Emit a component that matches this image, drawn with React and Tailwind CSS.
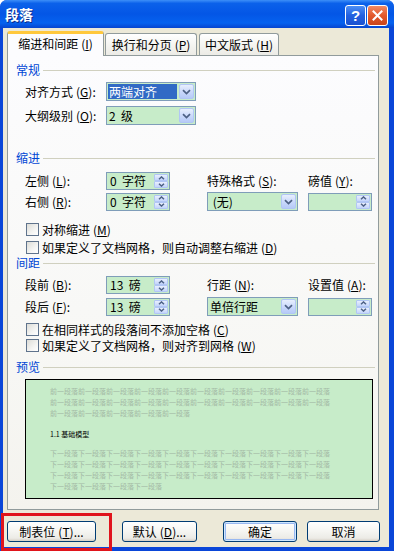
import React from "react";

function K({ c }) {
  return (
    <span className="ml-[3px]">
      (<span className="underline underline-offset-[1px]">{c}</span>)
    </span>
  );
}

function DropBtn() {
  return (
    <div className="w-[15px] h-full rounded-[2px] border border-[#b1c6f5] bg-[linear-gradient(180deg,#e8effd_0%,#c9d8fb_55%,#b6caf7_100%)] flex items-center justify-center">
      <svg width="9" height="6" viewBox="0 0 9 6">
        <path d="M1 1.2 L4.5 4.6 L8 1.2" fill="none" stroke="#4d6185" strokeWidth="1.7" />
      </svg>
    </div>
  );
}

function Select({ className, children, highlight }) {
  return (
    <div className={`h-[19px] border border-[#7f9db9] bg-[#c7ecc9] flex p-px ${className}`}>
      <div className="flex-1 flex items-center pr-[2px]">
        {highlight ? (
          <div className="w-full h-full bg-[#316ac5] text-white flex items-center pl-[1px] leading-none">{children}</div>
        ) : (
          <span className="pl-[1px] leading-none whitespace-pre">{children}</span>
        )}
      </div>
      <DropBtn />
    </div>
  );
}

function SpinHalf({ up }) {
  return (
    <div className="flex-1 rounded-[1px] border border-[#b1c6f5] bg-[linear-gradient(180deg,#e8effd_0%,#c4d5fb_100%)] flex items-center justify-center">
      <svg width="7" height="4" viewBox="0 0 7 4">
        {up ? (
          <path d="M1 3.3 L3.5 0.9 L6 3.3" fill="none" stroke="#4d6185" strokeWidth="1.4" />
        ) : (
          <path d="M1 0.7 L3.5 3.1 L6 0.7" fill="none" stroke="#4d6185" strokeWidth="1.4" />
        )}
      </svg>
    </div>
  );
}

function Spin({ children }) {
  return (
    <div className="w-[64px] h-[18px] border border-[#7f9db9] bg-[#c7ecc9] flex p-px">
      <div className="flex-1 flex items-center pl-[2px] leading-none whitespace-pre">{children}</div>
      <div className="w-[14px] flex flex-col">
        <SpinHalf up />
        <SpinHalf />
      </div>
    </div>
  );
}

function Cb({ children, className }) {
  return (
    <div className={`h-[13px] flex items-center ml-[10px] ${className}`}>
      <div className="w-[13px] h-[13px] border border-[#5f738c] bg-[linear-gradient(135deg,#dcdcd7_0%,#f4f4f2_60%,#ffffff_100%)]" />
      <span className="ml-[3px] leading-none whitespace-nowrap">{children}</span>
    </div>
  );
}

function Header({ children, className }) {
  return (
    <div className={`h-[14px] flex items-center pr-[3px] ${className}`}>
      <span className="text-[#0046d5] leading-none">{children}</span>
      <div className="flex-1 h-px bg-[#d0d0bf] ml-[3px]" />
    </div>
  );
}

function Btn({ className, children, def }) {
  return (
    <div
      className={`h-[21px] rounded-[3px] border border-[#003c74] bg-[linear-gradient(180deg,#ffffff_0%,#f6f6f3_45%,#ecebe6_85%,#d6d0c5_100%)] flex items-center justify-center leading-none ${def ? "shadow-[inset_0_0_0_1px_#cee7ff,inset_0_0_0_2px_#98b8f1]" : ""} ${className}`}
    >
      {children}
    </div>
  );
}

const before = ["前一段落".repeat(10), "前一段落".repeat(10), "前一段落".repeat(5)];
const after = ["下一段落".repeat(10), "下一段落".repeat(10), "下一段落".repeat(10), "下一段落".repeat(4)];

export default function App() {
  return (
    <div className="w-[394px] h-[551px] overflow-hidden bg-white relative font-['Noto_Sans_CJK_SC','Noto_Sans',sans-serif] text-[12px] text-black">
      <div className="w-[394px] h-[551px] flex flex-col bg-[#0a46d8] rounded-t-[7px]">
        {/* Title bar */}
        <div className="h-[28px] rounded-t-[7px] bg-[linear-gradient(180deg,#3d8ff8_0%,#0b61ea_12%,#0456e6_50%,#0662ef_82%,#0745cf_100%)] flex items-center pl-[5px] pr-[6px]">
          <span className="text-white font-bold text-[14px] leading-none [text-shadow:1px_1px_0_#0c2a8a]">段落</span>
          <div className="ml-auto flex gap-[1px] mt-[2px]">
            <div className="w-[21px] h-[21px] rounded-[3px] border border-white bg-[linear-gradient(180deg,#4d8ff5_0%,#2260e0_50%,#1a52d0_100%)] flex items-center justify-center">
              <span className="text-white font-bold text-[15px] leading-none font-['Liberation_Sans',sans-serif]">?</span>
            </div>
            <div className="w-[21px] h-[21px] rounded-[3px] border border-white bg-[linear-gradient(180deg,#f08a65_0%,#e2592c_50%,#c9441b_100%)] flex items-center justify-center">
              <svg width="11" height="11" viewBox="0 0 11 11">
                <path d="M1.5 1.5 L9.5 9.5 M9.5 1.5 L1.5 9.5" stroke="white" strokeWidth="2" strokeLinecap="square" />
              </svg>
            </div>
          </div>
        </div>

        {/* Body */}
        <div className="ml-[3px] mr-[5px] h-[519px] bg-[#ece9d8] flex flex-col">
          {/* Tabs */}
          <div className="h-[27px] pl-[4px] flex items-end">
            <div className="relative z-10 -mb-px w-[97px] h-[25px] bg-[#fcfcfe] border border-[#919b9c] border-b-0 border-t-[3px] border-t-[#ffc83c] rounded-t-[3px] flex items-center justify-center leading-none pb-[2px]">
              缩进和间距<K c="I" />
            </div>
            <div className="ml-px w-[92px] h-[22px] bg-[linear-gradient(180deg,#ffffff_0%,#f3f3ef_60%,#ecebe6_100%)] border border-[#919b9c] border-b-0 rounded-t-[3px] flex items-center justify-center leading-none">
              换行和分页<K c="P" />
            </div>
            <div className="ml-[2px] w-[80px] h-[22px] bg-[linear-gradient(180deg,#ffffff_0%,#f3f3ef_60%,#ecebe6_100%)] border border-[#919b9c] border-b-0 rounded-t-[3px] flex items-center justify-center leading-none">
              中文版式<K c="H" />
            </div>
          </div>

          {/* Panel */}
          <div className="ml-[4px] w-[372px] h-[455px] border border-[#919b9c] bg-[linear-gradient(180deg,#fcfcfe_0%,#f7f7f4_70%,#f4f3ee_100%)] pl-[8px] flex flex-col">
            <Header className="mt-[7px]">常规</Header>
            <div className="mt-[5px] h-[19px] flex items-center">
              <span className="ml-[9px] w-[81px] leading-none">对齐方式<K c="G" />:</span>
              <Select className="w-[90px]" highlight>两端对齐</Select>
            </div>
            <div className="mt-[5px] h-[19px] flex items-center">
              <span className="ml-[9px] w-[81px] leading-none">大纲级别<K c="O" />:</span>
              <Select className="w-[90px]">{"2  级"}</Select>
            </div>

            <Header className="mt-[26px]">缩进</Header>
            <div className="mt-[7px] h-[18px] flex items-center">
              <span className="ml-[9px] w-[81px] leading-none">左侧<K c="L" />:</span>
              <Spin>{"0  字符"}</Spin>
              <span className="ml-[37px] w-[101px] leading-none">特殊格式<K c="S" />:</span>
              <span className="leading-none">磅值<K c="Y" />:</span>
            </div>
            <div className="mt-[2px] h-[19px] flex items-center">
              <span className="ml-[9px] w-[81px] leading-none">右侧<K c="R" />:</span>
              <Spin>{"0  字符"}</Spin>
              <Select className="ml-[37px] w-[91px]">{" (无)"}</Select>
              <div className="ml-[10px]">
                <Spin></Spin>
              </div>
            </div>
            <Cb className="mt-[12px]">对称缩进<K c="M" /></Cb>
            <Cb className="mt-[5px]">如果定义了文档网格，则自动调整右缩进<K c="D" /></Cb>

            <Header className="mt-[2px]">间距</Header>
            <div className="mt-[6px] h-[18px] flex items-center">
              <span className="ml-[9px] w-[81px] leading-none">段前<K c="B" />:</span>
              <Spin>{"13  磅"}</Spin>
              <span className="ml-[37px] w-[101px] leading-none">行距<K c="N" />:</span>
              <span className="leading-none">设置值<K c="A" />:</span>
            </div>
            <div className="mt-[3px] h-[19px] flex items-center">
              <span className="ml-[9px] w-[81px] leading-none">段后<K c="F" />:</span>
              <Spin>{"13  磅"}</Spin>
              <Select className="ml-[37px] w-[91px]">单倍行距</Select>
              <div className="ml-[10px]">
                <Spin></Spin>
              </div>
            </div>
            <Cb className="mt-[7px]">在相同样式的段落间不添加空格<K c="C" /></Cb>
            <Cb className="mt-[3px]">如果定义了文档网格，则对齐到网格<K c="W" /></Cb>

            <Header className="mt-[8px]">预览</Header>
            <div className="mt-[5px] ml-[9px] w-[348px] h-[120px] border border-black bg-[#c7ecc9] pl-[24px] pt-[6px] flex flex-col text-[7px] leading-[11px]">
              {before.map((t, i) => (
                <div key={"b" + i} className="text-[#a3b9a5] whitespace-nowrap">{t}</div>
              ))}
              <div className="mt-[10px] text-black whitespace-nowrap">1.1 基础模型</div>
              <div className="mt-[8px]" />
              {after.map((t, i) => (
                <div key={"a" + i} className="text-[#a3b9a5] whitespace-nowrap">{t}</div>
              ))}
            </div>
          </div>

          {/* Buttons */}
          <div className="mt-[11px] h-[21px] flex">
            <Btn className="ml-[4px] w-[89px]">制表位<K c="T" />...</Btn>
            <Btn className="ml-[26px] w-[75px]">默认<K c="D" />...</Btn>
            <Btn className="ml-[26px] w-[74px]" def>确定</Btn>
            <Btn className="ml-[10px] w-[73px]">取消</Btn>
          </div>
        </div>
      </div>

      {/* red annotation box */}
      <div className="absolute left-[1px] top-[513px] w-[111px] h-[38px] border-[3px] border-[#e0141c]" />
    </div>
  );
}
